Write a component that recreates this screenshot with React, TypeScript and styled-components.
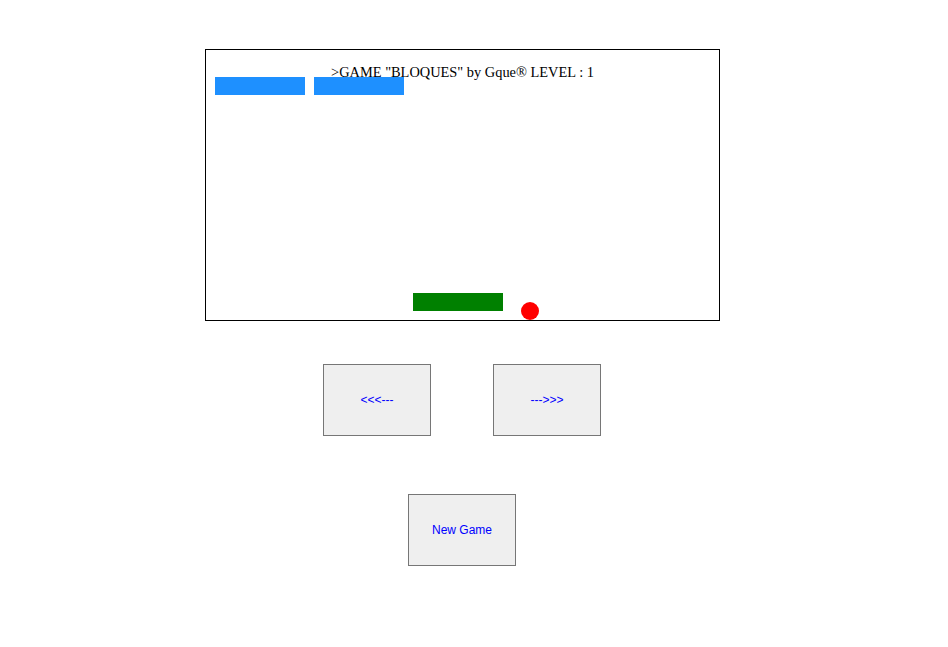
import React from "react";
import styled, { createGlobalStyle } from "styled-components";

const Global = createGlobalStyle`
  html, body { margin: 0; padding: 0; background: #ffffff; }
  body { font-family: "Liberation Serif", "Times New Roman", serif; }
`;

const Page = styled.div`
  display: flex;
  flex-direction: column;
  align-items: flex-start;
  padding: 49px 0 0 205px;
`;

const Board = styled.div`
  position: relative;
  box-sizing: content-box;
  width: 513px;
  height: 270px;
  border: 1px solid #000000;
  text-align: center;
`;

const Title = styled.div`
  position: relative;
  z-index: 1;
  padding-top: 14px;
  font-family: "Liberation Serif", "Times New Roman", serif;
  font-size: 14.4px;
  line-height: 16px;
  color: #000000;
`;

const Piece = styled.div<{ $x: number; $y: number; $color: string }>`
  position: absolute;
  left: ${(p) => p.$x}px;
  top: ${(p) => p.$y}px;
  width: 90px;
  height: 18px;
  background: ${(p) => p.$color};
`;

const Ball = styled.div<{ $x: number; $y: number }>`
  position: absolute;
  left: ${(p) => p.$x - 9}px;
  top: ${(p) => p.$y - 9}px;
  width: 18px;
  height: 18px;
  border-radius: 50%;
  background: #ff0000;
`;

const ControlStack = styled.div`
  display: flex;
  flex-direction: column;
  align-items: center;
  width: 514px;
`;

const Controls = styled.div`
  display: flex;
  gap: 62px;
  margin-top: 43px;
`;

const NewRow = styled.div`
  display: flex;
  margin-top: 58px;
`;

const GameButton = styled.button`
  box-sizing: border-box;
  width: 108px;
  height: 72px;
  padding: 0;
  margin: 0;
  border: 1px solid #767676;
  border-radius: 0;
  background: #efefef;
  color: #0000ff;
  font-family: "Liberation Sans", Arial, sans-serif;
  font-size: 12px;
  cursor: pointer;
`;

const blocks = [
  { x: 9, y: 27 },
  { x: 108, y: 27 },
];

export default function App() {
  return (
    <>
      <Global />
      <Page>
        <Board>
          <Title>&gt;GAME "BLOQUES" by Gque® LEVEL : 1</Title>
          {blocks.map((b, i) => (
            <Piece key={i} $x={b.x} $y={b.y} $color="#1e90ff" />
          ))}
          <Piece $x={207} $y={243} $color="#008000" />
          <Ball $x={324} $y={261} />
        </Board>
        <ControlStack>
          <Controls>
            <GameButton>&lt;&lt;&lt;---</GameButton>
            <GameButton>---&gt;&gt;&gt;</GameButton>
          </Controls>
          <NewRow>
            <GameButton>New Game</GameButton>
          </NewRow>
        </ControlStack>
      </Page>
    </>
  );
}
